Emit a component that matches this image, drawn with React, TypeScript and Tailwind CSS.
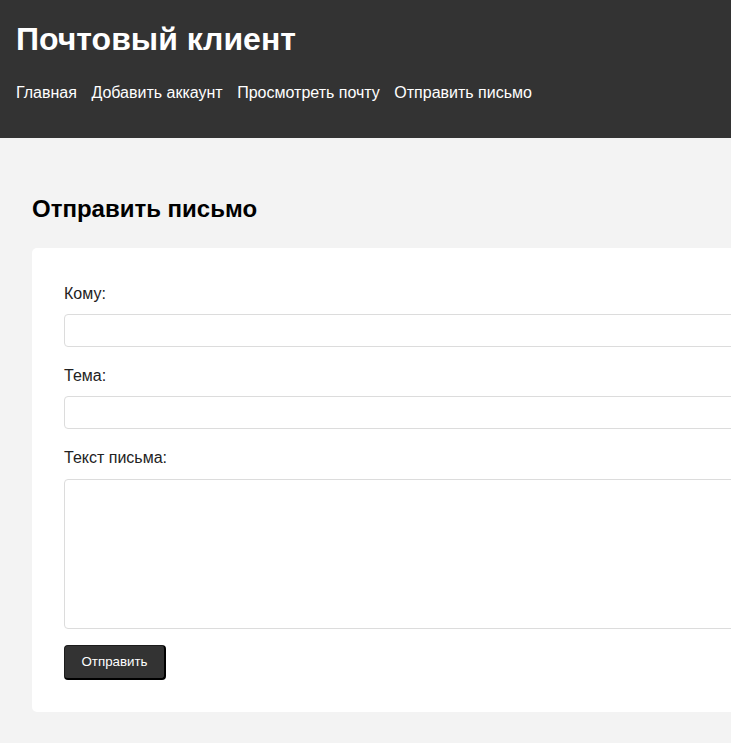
export default function App() {
  const links = ['Главная', 'Добавить аккаунт', 'Просмотреть почту', 'Отправить письмо'];

  return (
    <div className="min-h-screen w-full overflow-hidden bg-[#f3f3f3] font-['Liberation_Sans',Arial,sans-serif]">
      <header className="bg-[#333333] px-4 pt-[21px] pb-[36px] text-white">
        <h1 className="text-[32px] font-bold leading-[37px]">Почтовый клиент</h1>
        <nav className="mt-[26px] flex gap-[14.5px] text-[16px] leading-[18px]">
          {links.map((link) => (
            <a key={link} href="#" className="whitespace-nowrap text-white">
              {link}
            </a>
          ))}
        </nav>
      </header>

      <main className="px-8 pt-[57px] pb-8">
        <h2 className="text-[24px] font-bold leading-[28px] text-black">Отправить письмо</h2>

        <form className="mt-[25px] w-[900px] shrink-0 rounded-[5px] bg-white px-8 pt-[37px] pb-[32px] text-[16px] text-[#222]">
          <label className="block leading-[18px]">Кому:</label>
          <input
            type="text"
            className="mt-[11px] block h-[33px] w-full rounded-[4px] border border-[#dcdcdc] bg-white px-2"
          />

          <label className="mt-[20px] block leading-[18px]">Тема:</label>
          <input
            type="text"
            className="mt-[11px] block h-[33px] w-full rounded-[4px] border border-[#dcdcdc] bg-white px-2"
          />

          <label className="mt-[20px] block leading-[18px]">Текст письма:</label>
          <textarea className="mt-[12px] block h-[150px] w-full resize-none rounded-[4px] border border-[#dcdcdc] bg-white px-2" />

          <button
            type="button"
            className="mt-[16px] flex h-[35px] w-[102px] items-center justify-center rounded-[4px] border-t border-l border-r-2 border-b-2 border-t-[#1c1c1c] border-l-[#1c1c1c] border-r-black border-b-black bg-[#333333] text-[13.33px] text-white"
          >
            Отправить
          </button>
        </form>
      </main>
    </div>
  );
}
